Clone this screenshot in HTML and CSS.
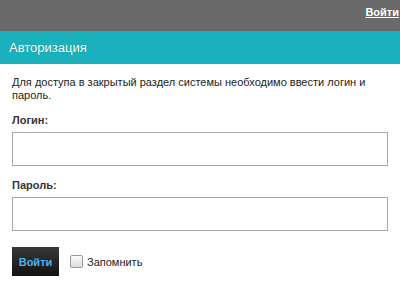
FILE: index.html
```html
<!DOCTYPE html>
<html lang="ru">
<head>
<meta charset="utf-8">
<link rel="stylesheet" href="styles.css">
</head>
<body>
<div class="topbar"><a class="toplink" href="#">Войти</a></div>
<div class="titlebar">Авторизация</div>
<div class="content">
  <p class="intro">Для доступа в закрытый раздел системы необходимо ввести логин и пароль.</p>
  <label class="field-label">Логин:</label>
  <input class="field" type="text">
  <label class="field-label second">Пароль:</label>
  <input class="field" type="password">
  <div class="actions">
    <button class="btn">Войти</button>
    <label class="remember"><span class="checkbox"></span>Запомнить</label>
  </div>
</div>
</body>
</html>
```
FILE: styles.css
```css
html, body { margin: 0; padding: 0; background: #fff; }
body { font-family: "Liberation Sans", Arial, sans-serif; font-size: 11px; color: #222; width: 400px; }
.topbar { height: 31px; background: #6a6a6a; display: flex; justify-content: flex-end; align-items: flex-start; }
.toplink { color: #fff; font-weight: bold; font-size: 11px; line-height: 13px; padding-top: 6px; padding-right: 1px; text-decoration: underline; }
.titlebar { height: 33px; background: #1bb1bc; color: #fff; font-size: 13px; line-height: 33px; padding-left: 9px; text-shadow: 0 0 1px rgba(0,0,0,0.3); }
.content { padding: 0 12px; display: flex; flex-direction: column; align-items: flex-start; }
.intro { margin: 12px 0 0; line-height: 13px; color: #222; }
.field-label { display: block; font-weight: bold; margin-top: 12px; line-height: 13px; color: #333; }
.field-label.second { margin-top: 13px; }
.field { box-sizing: border-box; width: 376px; height: 34px; border: 1px solid #aaa; margin: 5px 0 0; padding: 0 5px; font: inherit; background: #fff; outline: none; }
.actions { display: flex; align-items: center; margin-top: 16px; }
.btn { width: 47px; height: 29px; border: 0; padding: 0; background: linear-gradient(#383838, #121212); color: #4db3f0; font: bold 11px "Liberation Sans", Arial, sans-serif; }
.remember { display: flex; align-items: center; margin-left: 11px; color: #222; }
.checkbox { box-sizing: border-box; width: 13px; height: 13px; border: 1px solid #999; border-radius: 2px; background: linear-gradient(#fcfcfc, #dcdcdc); margin-right: 4px; }
```
